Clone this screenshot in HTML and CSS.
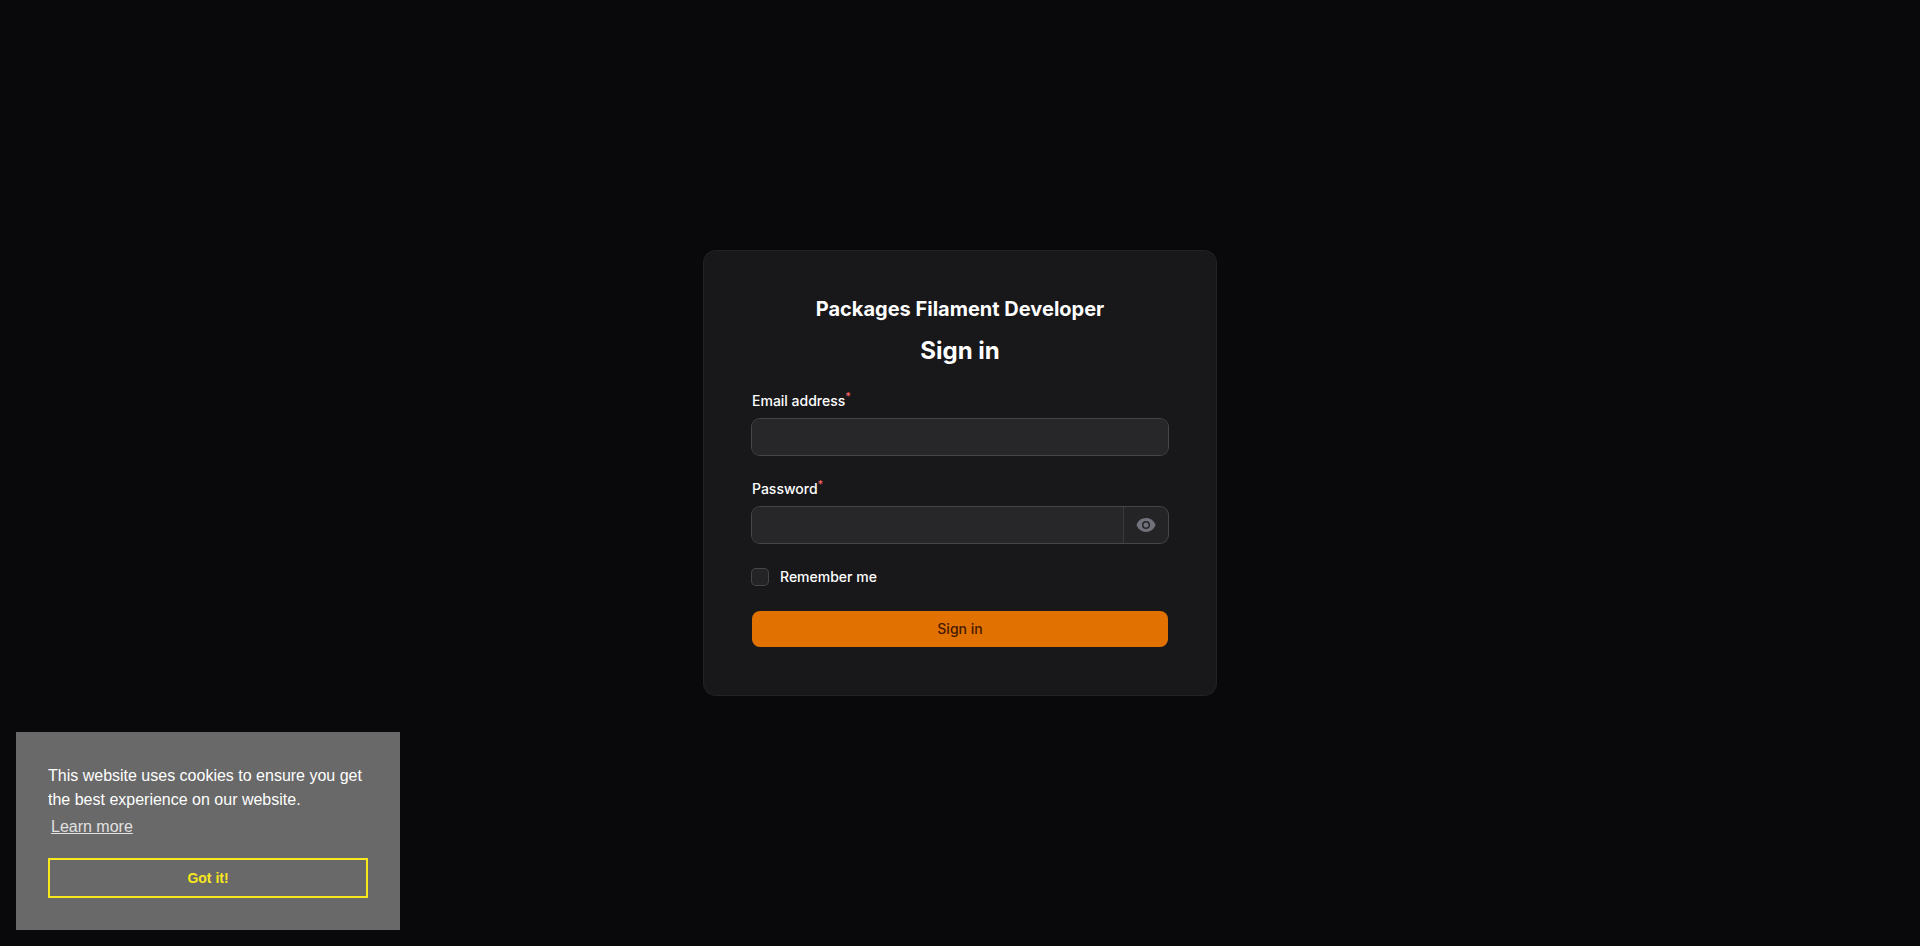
FILE: index.html
```html
<!DOCTYPE html>
<html lang="en">
<head>
    <meta charset="UTF-8">
    <meta name="viewport" content="width=device-width, initial-scale=1.0">
    <title>Sign in - Packages Filament Developer</title>
    <link rel="stylesheet" href="styles.css">
</head>
<body>
    <main class="login-page">
        <section class="login-card">
            <header class="login-header">
                <div class="brand">Packages Filament Developer</div>
                <h1>Sign in</h1>
            </header>

            <form class="login-form">
                <div class="field">
                    <label for="email">Email address<sup>*</sup></label>
                    <div class="input-wrapper">
                        <input type="email" id="email" autocomplete="email" required>
                    </div>
                </div>

                <div class="field">
                    <label for="password">Password<sup>*</sup></label>
                    <div class="input-wrapper">
                        <input type="password" id="password" autocomplete="current-password" required>
                        <div class="input-suffix">
                            <button type="button" class="reveal-button" id="revealButton" aria-label="Show password">
                                <svg viewBox="0 0 20 20" fill="currentColor" aria-hidden="true">
                                    <path d="M10 12.5a2.5 2.5 0 1 0 0-5 2.5 2.5 0 0 0 0 5Z"/>
                                    <path fill-rule="evenodd" clip-rule="evenodd" d="M.664 10.59a1.651 1.651 0 0 1 0-1.186A10.004 10.004 0 0 1 10 3c4.257 0 7.893 2.66 9.336 6.41.147.381.146.804 0 1.186A10.004 10.004 0 0 1 10 17c-4.257 0-7.893-2.66-9.336-6.41ZM14 10a4 4 0 1 1-8 0 4 4 0 0 1 8 0Z"/>
                                </svg>
                            </button>
                        </div>
                    </div>
                </div>

                <label class="remember" for="remember">
                    <input type="checkbox" id="remember">
                    <span>Remember me</span>
                </label>

                <button type="submit" class="submit-button">Sign in</button>
            </form>
        </section>
    </main>

    <!-- Cookie consent -->
    <aside class="cookie-window" id="cookieWindow" aria-label="Cookie consent">
        <p class="cookie-message">
            This website uses cookies to ensure you get the best experience on our website.
            <a class="cookie-link" href="#">Learn more</a>
        </p>
        <button type="button" class="cookie-button" id="cookieButton">Got it!</button>
    </aside>

    <script>
        const password = document.getElementById('password');
        const cookieWindow = document.getElementById('cookieWindow');

        document.getElementById('revealButton').addEventListener('click', () => {
            password.type = password.type === 'password' ? 'text' : 'password';
        });

        document.getElementById('cookieButton').addEventListener('click', () => {
            cookieWindow.remove();
        });
    </script>
</body>
</html>
```
FILE: styles.css
```css
* {
    box-sizing: border-box;
}

body {
    margin: 0;
    font-family: Inter, sans-serif;
    font-size: 14px;
    line-height: 20px;
    color: #fff;
    background-color: #09090b;
}

button,
input {
    font: inherit;
    color: inherit;
}

.login-page {
    display: flex;
    align-items: center;
    justify-content: center;
    min-height: 100vh;
}

.login-card {
    width: 100%;
    max-width: 512px;
    padding: 48px;
    border-radius: 12px;
    background-color: #18181b;
    box-shadow: 0 0 0 1px rgba(255, 255, 255, 0.1);
}

.login-header {
    display: flex;
    flex-direction: column;
    align-items: center;
    gap: 16px;
    margin-bottom: 24px;
}

.brand {
    font-size: 20px;
    line-height: 20px;
    font-weight: 700;
}

h1 {
    margin: 0;
    font-size: 24px;
    line-height: 32px;
    font-weight: 700;
}

.login-form {
    display: flex;
    flex-direction: column;
    gap: 24px;
}

.field {
    display: flex;
    flex-direction: column;
    gap: 8px;
}

.field label,
.remember {
    font-weight: 500;
}

.field sup {
    font-size: 11px;
    line-height: 0;
    color: #ff6467;
}

.input-wrapper {
    display: flex;
    height: 36px;
    border-radius: 8px;
    background-color: #242427;
    box-shadow: 0 0 0 1px #464648;
    overflow: hidden;
}

.input-wrapper input {
    flex: 1;
    min-width: 0;
    padding: 6px 12px;
    border: none;
    outline: none;
    background-color: #272729;
}

.input-wrapper:focus-within {
    box-shadow: 0 0 0 2px #fe9a00;
}

.input-suffix {
    display: flex;
    align-items: center;
    padding: 0 12px;
    border-left: 1px solid #3a3a3c;
}

.reveal-button {
    padding: 0;
    border: none;
    background: none;
    color: #71717b;
    cursor: pointer;
}

.reveal-button svg {
    display: block;
    width: 20px;
    height: 20px;
}

.remember {
    display: flex;
    align-items: center;
    gap: 12px;
}

.remember input {
    appearance: none;
    width: 16px;
    height: 16px;
    margin: 0;
    border-radius: 4px;
    background-color: #242427;
    box-shadow: 0 0 0 1px #464648;
}

.remember input:checked {
    background-color: #e17100;
}

.submit-button {
    padding: 8px 12px;
    border: none;
    border-radius: 8px;
    font-weight: 500;
    color: #461901;
    background-color: #e17100;
    cursor: pointer;
}

.submit-button:hover {
    background-color: #fe9a00;
}

.cookie-window {
    position: fixed;
    left: 16px;
    bottom: 16px;
    display: flex;
    flex-direction: column;
    gap: 16px;
    width: 384px;
    max-width: calc(100% - 32px);
    padding: 32px;
    font-family: "Liberation Sans", Helvetica, Arial, sans-serif;
    font-size: 16px;
    line-height: 24px;
    background-color: #696969;
}

.cookie-message {
    margin: 0;
}

.cookie-link {
    display: inline-block;
    padding: 3px;
    color: #fff;
    opacity: 0.8;
    text-decoration: underline;
}

.cookie-link:hover {
    opacity: 1;
}

.cookie-button {
    padding: 6px 10px;
    border: 2px solid #f8e71c;
    font-size: 14px;
    line-height: 24px;
    font-weight: 700;
    color: #f8e71c;
    background: transparent;
    cursor: pointer;
}
```
